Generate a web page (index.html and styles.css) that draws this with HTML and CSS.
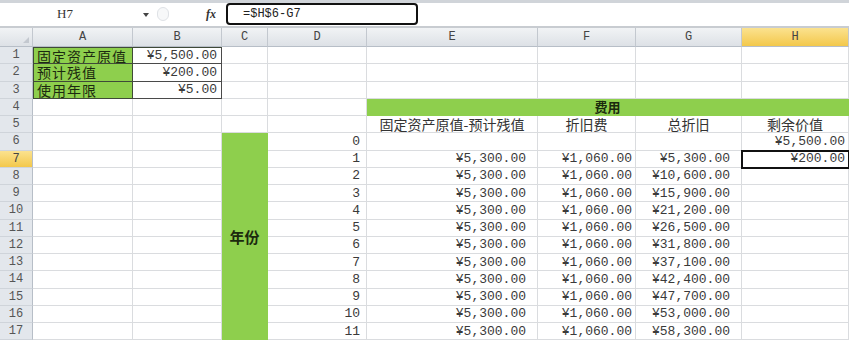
FILE: index.html
```
<!DOCTYPE html>
<html lang="zh-CN">
<head>
<meta charset="utf-8">
<title>固定资产折旧</title>
<link rel="stylesheet" href="styles.css">
</head>
<body>
<div class="topstrip"></div>
<div class="fbar">
  <div class="namebox">H7</div>
  <div class="ddarrow"></div>
  <div class="splitter"></div>
  <div class="fx">fx</div>
  <div class="formula">=$H$6-G7</div>
</div>
<div class="sheet">
  <div class="c ch corner"><span class="tri"></span></div>
  <div class="c ch">A</div><div class="c ch">B</div><div class="c ch">C</div><div class="c ch">D</div>
  <div class="c ch">E</div><div class="c ch">F</div><div class="c ch">G</div><div class="c ch sel">H</div>

  <div class="c rh">1</div>
  <div class="c g lab top">固定资产原值</div><div class="c n pb bx top">¥5,500.00</div>
  <div class="c"></div><div class="c"></div><div class="c"></div><div class="c"></div><div class="c"></div><div class="c"></div>

  <div class="c rh">2</div>
  <div class="c g lab">预计残值</div><div class="c n pb bx">¥200.00</div>
  <div class="c"></div><div class="c"></div><div class="c"></div><div class="c"></div><div class="c"></div><div class="c"></div>

  <div class="c rh">3</div>
  <div class="c g lab">使用年限</div><div class="c n pb bx">¥5.00</div>
  <div class="c"></div><div class="c"></div><div class="c"></div><div class="c"></div><div class="c"></div><div class="c"></div>

  <div class="c rh">4</div>
  <div class="c"></div><div class="c"></div><div class="c"></div><div class="c"></div>
  <div class="c g fee">费用</div>

  <div class="c rh">5</div>
  <div class="c"></div><div class="c"></div><div class="c"></div><div class="c"></div>
  <div class="c hd">固定资产原值-预计残值</div><div class="c hd">折旧费</div><div class="c hd">总折旧</div><div class="c hd">剩余价值</div>

  <div class="c rh">6</div>
  <div class="c"></div><div class="c"></div>
  <div class="c g year">年份</div>
  <div class="c n pd">0</div><div class="c"></div><div class="c"></div><div class="c"></div><div class="c n ph">¥5,500.00</div>

  <div class="c rh sel">7</div>
  <div class="c"></div><div class="c"></div>
  <div class="c n pd">1</div><div class="c n pe">¥5,300.00</div><div class="c n pf">¥1,060.00</div><div class="c n pg">¥5,300.00</div><div class="c n ph active">¥200.00</div>

  <div class="c rh">8</div>
  <div class="c"></div><div class="c"></div>
  <div class="c n pd">2</div><div class="c n pe">¥5,300.00</div><div class="c n pf">¥1,060.00</div><div class="c n pg">¥10,600.00</div><div class="c"></div>

  <div class="c rh">9</div>
  <div class="c"></div><div class="c"></div>
  <div class="c n pd">3</div><div class="c n pe">¥5,300.00</div><div class="c n pf">¥1,060.00</div><div class="c n pg">¥15,900.00</div><div class="c"></div>

  <div class="c rh">10</div>
  <div class="c"></div><div class="c"></div>
  <div class="c n pd">4</div><div class="c n pe">¥5,300.00</div><div class="c n pf">¥1,060.00</div><div class="c n pg">¥21,200.00</div><div class="c"></div>

  <div class="c rh">11</div>
  <div class="c"></div><div class="c"></div>
  <div class="c n pd">5</div><div class="c n pe">¥5,300.00</div><div class="c n pf">¥1,060.00</div><div class="c n pg">¥26,500.00</div><div class="c"></div>

  <div class="c rh">12</div>
  <div class="c"></div><div class="c"></div>
  <div class="c n pd">6</div><div class="c n pe">¥5,300.00</div><div class="c n pf">¥1,060.00</div><div class="c n pg">¥31,800.00</div><div class="c"></div>

  <div class="c rh">13</div>
  <div class="c"></div><div class="c"></div>
  <div class="c n pd">7</div><div class="c n pe">¥5,300.00</div><div class="c n pf">¥1,060.00</div><div class="c n pg">¥37,100.00</div><div class="c"></div>

  <div class="c rh">14</div>
  <div class="c"></div><div class="c"></div>
  <div class="c n pd">8</div><div class="c n pe">¥5,300.00</div><div class="c n pf">¥1,060.00</div><div class="c n pg">¥42,400.00</div><div class="c"></div>

  <div class="c rh">15</div>
  <div class="c"></div><div class="c"></div>
  <div class="c n pd">9</div><div class="c n pe">¥5,300.00</div><div class="c n pf">¥1,060.00</div><div class="c n pg">¥47,700.00</div><div class="c"></div>

  <div class="c rh">16</div>
  <div class="c"></div><div class="c"></div>
  <div class="c n pd">10</div><div class="c n pe">¥5,300.00</div><div class="c n pf">¥1,060.00</div><div class="c n pg">¥53,000.00</div><div class="c"></div>

  <div class="c rh">17</div>
  <div class="c"></div><div class="c"></div>
  <div class="c n pd">11</div><div class="c n pe">¥5,300.00</div><div class="c n pf">¥1,060.00</div><div class="c n pg">¥58,300.00</div><div class="c"></div>
</div>
</body>
</html>
```
FILE: styles.css
```
* { box-sizing: border-box; margin: 0; padding: 0; }
html, body { width: 849px; height: 341px; overflow: hidden; background: #fff; }
body { font-family: "Liberation Mono", "DejaVu Sans Mono", monospace; color: #333; }

.topstrip { height: 3px; background: #d0d4d9; }
.fbar {
  height: 25px; display: flex; align-items: flex-start; background: #fff;
  border-bottom: 2px solid #c8ccd1;
}
.namebox {
  width: 130px; height: 22px; display: flex; align-items: center; justify-content: center;
  font-family: "Liberation Serif", serif; font-size: 13px; color: #333;
}
.ddarrow {
  margin-left: 13px; margin-top: 10px; width: 0; height: 0;
  border-left: 3px solid transparent; border-right: 3px solid transparent; border-top: 4px solid #444;
}
.splitter {
  margin-left: 8px; margin-top: 4px; width: 12px; height: 14px;
  border: 1px solid #dfe2e6; border-radius: 7px; background: #f7f8f9;
}
.fx {
  margin-left: 37px; width: 14px; height: 22px; display: flex; align-items: center;
  font-family: "Liberation Serif", serif; font-style: italic; font-weight: bold; font-size: 12px; color: #333;
}
.formula {
  margin-left: 6px; width: 192px; height: 22px;
  border: 2px solid #111; border-radius: 4px;
  display: flex; align-items: center; padding-left: 15px;
  font-family: "Liberation Mono", monospace; font-size: 12px; color: #222;
}

.sheet {
  display: grid;
  grid-template-columns: 33px 100px 89px 46px 99px 171px 98px 106px 107px;
  grid-template-rows: 19px repeat(17, 17.25px);
}
.c {
  border-right: 1px solid #dadcdf; border-bottom: 1px solid #dadcdf;
  display: flex; align-items: center; overflow: hidden; white-space: nowrap;
  font-size: 13px; line-height: 1; color: #3a3a3a;
}
.ch {
  background: linear-gradient(#f1f3f5, #dde1e6);
  border-right: 1px solid #c3c8cf; border-bottom: 1px solid #b7bec7;
  justify-content: center; font-size: 12px; color: #444;
}
.corner { justify-content: flex-end; align-items: flex-end; padding: 0 3px 3px 0; }
.tri {
  width: 0; height: 0; border-left: 6px solid transparent; border-bottom: 6px solid #c3c8cf;
}
.rh {
  background: #e3e7ec; border-right: 1px solid #b7bec7; border-bottom: 1px solid #cfd4da;
  justify-content: center; font-size: 12px; color: #555;
}
.sel { background: linear-gradient(#fbe28f, #f3c84b); color: #444; }

.g { background: #8ecf4d; border-color: #8ecf4d; }
.lab {
  font-family: "Noto Sans CJK SC", sans-serif; font-size: 14px; line-height: 14px; color: #1c2a10;
  padding-left: 3px; letter-spacing: 1px; border: 1px solid #3f4a38; border-top: none;
}
.lab.top, .bx.top { border-top: 1px solid #3f4a38; }
.bx { border-right: 1px solid #4a4a4a; border-bottom: 1px solid #4a4a4a; }

.fee {
  grid-column: 6 / 10; justify-content: center;
  font-family: "Noto Sans CJK SC", sans-serif; font-weight: bold; font-size: 13px; color: #1b2a0e;
}
.year {
  grid-column: 4; grid-row: 7 / 19; justify-content: center;
  font-family: "Noto Sans CJK SC", sans-serif; font-weight: bold; font-size: 15px; color: #1b2a0e;
}
.hd {
  justify-content: center;
  font-family: "Noto Sans CJK SC", sans-serif; font-size: 14px; color: #333;
}

.n { justify-content: flex-end; }
.pb { padding-right: 4px; }
.pd { padding-right: 6px; }
.pe { padding-right: 11px; }
.pf { padding-right: 3px; }
.pg { padding-right: 11px; }
.ph { padding-right: 3px; }

.active { position: relative; z-index: 1; outline: 2px solid #111; outline-offset: -1px; }
```
